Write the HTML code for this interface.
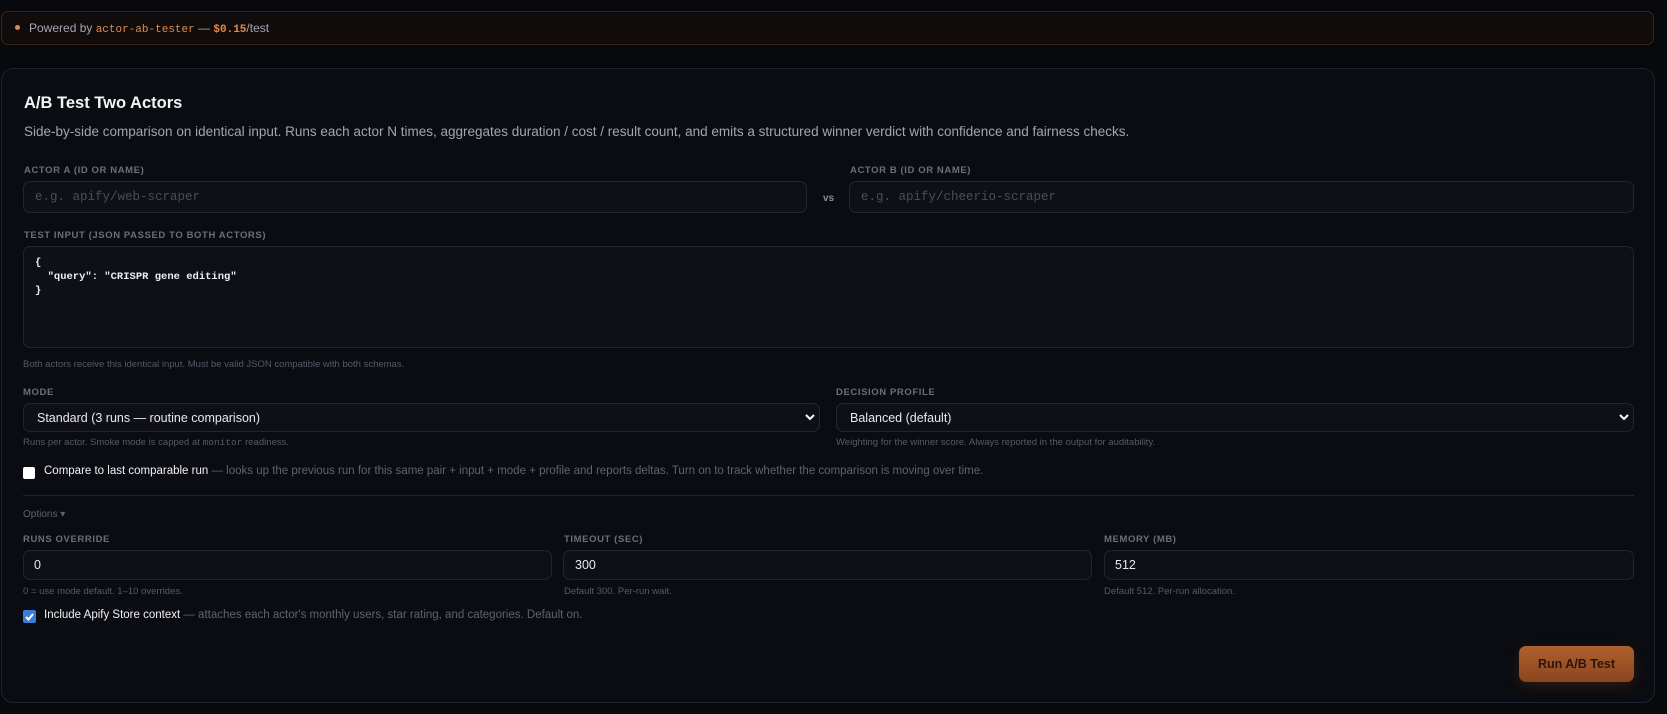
<!DOCTYPE html>
<html><head><meta charset="utf-8"><style>
*{box-sizing:border-box;margin:0;padding:0}
body{width:1667px;height:714px;background:#08090d;font-family:"Liberation Sans",sans-serif;position:relative;overflow:hidden;color:#e6e7ee}
.a{position:absolute;white-space:nowrap}
.mono{font-family:"Liberation Mono",monospace}
.banner{left:1px;top:11px;width:1653px;height:34px;border:1px solid #3a2416;border-radius:7px;background:#100c0c}
.card{left:1px;top:68px;width:1654px;height:635px;border:1px solid #1e2130;border-radius:12px;background:#0b0c11}
.lbl{font-size:9.5px;letter-spacing:.6px;color:#6b6e7c;font-weight:bold}
.box{border:1px solid #212433;border-radius:7px;background:#0f1017}
.hint{font-size:9.5px;color:#565a68}
.ph{font-size:12.5px;color:#4a4d5a;font-family:"Liberation Mono",monospace}
.val{font-size:12.5px;color:#e8e9ee}
</style></head><body>
<div class="a banner"></div>
<div class="a" style="left:15px;top:25px;width:5px;height:5px;border-radius:50%;background:#e38a4a"></div>
<div class="a" style="left:29px;top:21px;font-size:12px;color:#a3a5b0">Powered by <span class="mono" style="color:#e38a4a;font-size:11px">actor-ab-tester</span> — <span class="mono" style="color:#e38a4a;font-weight:bold;font-size:11px">$0.15</span>/test</div>

<div class="a card"></div>
<div class="a" style="left:24px;top:94px;font-size:16.5px;font-weight:bold;color:#f3f4f8">A/B Test Two Actors</div>
<div class="a" style="left:24px;top:124px;font-size:13.5px;color:#a2a5b2">Side-by-side comparison on identical input. Runs each actor N times, aggregates duration / cost / result count, and emits a structured winner verdict with confidence and fairness checks.</div>

<div class="a lbl" style="left:24px;top:165px">ACTOR A (ID OR NAME)</div>
<div class="a box" style="left:23px;top:181px;width:784px;height:32px"></div>
<div class="a ph" style="left:35px;top:190px">e.g. apify/web-scraper</div>
<div class="a" style="left:823px;top:193px;font-size:10px;font-weight:bold;color:#8a8d9a">vs</div>
<div class="a lbl" style="left:850px;top:165px">ACTOR B (ID OR NAME)</div>
<div class="a box" style="left:849px;top:181px;width:785px;height:32px"></div>
<div class="a ph" style="left:861px;top:190px">e.g. apify/cheerio-scraper</div>

<div class="a lbl" style="left:24px;top:230px">TEST INPUT (JSON PASSED TO BOTH ACTORS)</div>
<div class="a box" style="left:23px;top:246px;width:1611px;height:102px"></div>
<div class="a mono" style="left:35px;top:256px;font-size:10.5px;line-height:14px;color:#eceef3;font-weight:bold;white-space:pre">{
  "query": "CRISPR gene editing"
}</div>
<div class="a hint" style="left:23px;top:359px">Both actors receive this identical input. Must be valid JSON compatible with both schemas.</div>

<div class="a lbl" style="left:23px;top:387px">MODE</div>
<div class="a box" style="left:23px;top:403px;width:797px;height:29px"></div>
<div class="a val" style="left:37px;top:411px">Standard (3 runs — routine comparison)</div>
<svg class="a" style="left:804px;top:411px" width="12" height="12" viewBox="0 0 12 12"><path d="M2 4l4 4 4-4" stroke="#fff" stroke-width="2" fill="none"/></svg>
<div class="a hint" style="left:23px;top:437px">Runs per actor. Smoke mode is capped at <span class="mono">monitor</span> readiness.</div>

<div class="a lbl" style="left:836px;top:387px">DECISION PROFILE</div>
<div class="a box" style="left:836px;top:403px;width:798px;height:29px"></div>
<div class="a val" style="left:850px;top:411px">Balanced (default)</div>
<svg class="a" style="left:1618px;top:411px" width="12" height="12" viewBox="0 0 12 12"><path d="M2 4l4 4 4-4" stroke="#fff" stroke-width="2" fill="none"/></svg>
<div class="a hint" style="left:836px;top:437px">Weighting for the winner score. Always reported in the output for auditability.</div>

<div class="a" style="left:23px;top:467px;width:12px;height:12px;background:#fff;border-radius:2px"></div>
<div class="a" style="left:44px;top:465px;font-size:11.5px;color:#f0f1f5">Compare to last comparable run <span style="color:#5f6270">— looks up the previous run for this same pair + input + mode + profile and reports deltas. Turn on to track whether the comparison is moving over time.</span></div>

<div class="a" style="left:23px;top:495px;width:1611px;height:1px;background:#1f2230"></div>
<div class="a" style="left:23px;top:509px;font-size:10px;color:#5f6270">Options ▾</div>

<div class="a lbl" style="left:23px;top:534px">RUNS OVERRIDE</div>
<div class="a box" style="left:23px;top:550px;width:529px;height:30px"></div>
<div class="a val" style="left:34px;top:558px">0</div>
<div class="a hint" style="left:23px;top:586px">0 = use mode default. 1–10 overrides.</div>

<div class="a lbl" style="left:564px;top:534px">TIMEOUT (SEC)</div>
<div class="a box" style="left:563px;top:550px;width:529px;height:30px"></div>
<div class="a val" style="left:575px;top:558px">300</div>
<div class="a hint" style="left:564px;top:586px">Default 300. Per-run wait.</div>

<div class="a lbl" style="left:1104px;top:534px">MEMORY (MB)</div>
<div class="a box" style="left:1104px;top:550px;width:530px;height:30px"></div>
<div class="a val" style="left:1115px;top:558px">512</div>
<div class="a hint" style="left:1104px;top:586px">Default 512. Per-run allocation.</div>

<div class="a" style="left:23px;top:610px;width:13px;height:13px;background:#3d7bd9;border-radius:2px"></div>
<svg class="a" style="left:23px;top:610px" width="13" height="13" viewBox="0 0 13 13"><path d="M3 7l2.5 2.5L10 4" stroke="#fff" stroke-width="2" fill="none"/></svg>
<div class="a" style="left:44px;top:609px;font-size:11.5px;color:#f0f1f5">Include Apify Store context <span style="color:#5f6270">— attaches each actor's monthly users, star rating, and categories. Default on.</span></div>

<div class="a" style="left:1519px;top:646px;width:115px;height:36px;border-radius:7px;background:linear-gradient(#b0612c,#8a4520);box-shadow:0 4px 12px rgba(140,70,30,.25)"></div>
<div class="a" style="left:1519px;top:657px;width:115px;text-align:center;font-size:12.5px;font-weight:bold;color:#2a160c">Run A/B Test</div>
</body></html>
